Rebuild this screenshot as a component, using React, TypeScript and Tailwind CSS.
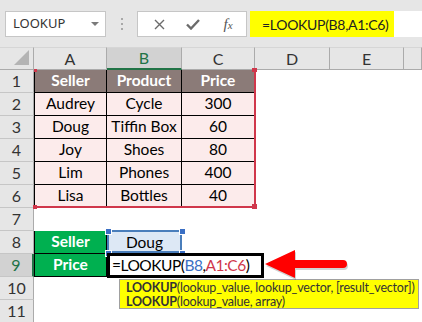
import React from "react";

const COLS = ["A", "B", "C", "D", "E", "F"];

type Cell = { t?: string; kind?: "head" | "body" | "green" | "blue" | "none" };

const rows: Cell[][] = [
  [{ t: "Seller", kind: "head" }, { t: "Product", kind: "head" }, { t: "Price", kind: "head" }],
  [{ t: "Audrey", kind: "body" }, { t: "Cycle", kind: "body" }, { t: "300", kind: "body" }],
  [{ t: "Doug", kind: "body" }, { t: "Tiffin Box", kind: "body" }, { t: "60", kind: "body" }],
  [{ t: "Joy", kind: "body" }, { t: "Shoes", kind: "body" }, { t: "80", kind: "body" }],
  [{ t: "Lim", kind: "body" }, { t: "Phones", kind: "body" }, { t: "400", kind: "body" }],
  [{ t: "Lisa", kind: "body" }, { t: "Bottles", kind: "body" }, { t: "40", kind: "body" }],
  [],
  [{ t: "Seller", kind: "green" }, { t: "Doug", kind: "blue" }],
  [{ t: "Price", kind: "green" }],
  [],
  [],
];

function cellClass(kind: Cell["kind"], col: number) {
  const left = col === 0 ? " border-l" : "";
  switch (kind) {
    case "head":
      return "flex items-center justify-center bg-[#8b7b78] text-white font-bold text-[15.5px] border-r border-b border-black" + left;
    case "body":
      return "flex items-center justify-center bg-[#fcebeb] text-black text-[15.5px] border-r border-b border-black" + left;
    case "green":
      return "flex items-center justify-center bg-[#00b050] text-white font-bold text-[15.5px] border-r border-b border-black" + left;
    case "blue":
      return "flex items-center justify-center bg-[#dde8f5] text-black text-[15.5px]";
    default:
      return "";
  }
}

export default function App() {
  return (
    <div className="w-[422px] h-[322px] overflow-hidden bg-white relative [font-family:Lato,'Liberation_Sans',sans-serif]">
      {/* Top formula bar */}
      <div className="h-[47px] bg-[#e6e6e6] flex items-start pt-[11px] pl-[5px]">
        <div className="w-[101px] h-[26px] bg-white border border-[#c6c6c6] flex items-center justify-between pl-[7px] pr-[6px]">
          <span className="text-[13px] text-[#333] [font-family:'Noto_Sans',sans-serif]">LOOKUP</span>
          <svg width="8" height="5" viewBox="0 0 8 5">
            <path d="M0 0 L8 0 L4 4 Z" fill="#7a7a7a" />
          </svg>
        </div>
        <div className="w-[31px] h-[26px] flex flex-col items-center justify-center gap-[3px]">
          <div className="w-[2px] h-[2px] bg-[#a8a8a8]" />
          <div className="w-[2px] h-[2px] bg-[#a8a8a8]" />
          <div className="w-[2px] h-[2px] bg-[#a8a8a8]" />
        </div>
        <div className="w-[110px] h-[26px] bg-white border border-[#c6c6c6] flex items-center">
          <div className="w-[42px] flex justify-center">
            <svg width="11" height="11" viewBox="0 0 11 11">
              <path d="M1 1 L10 10 M10 1 L1 10" stroke="#6b6b6b" strokeWidth="1.4" />
            </svg>
          </div>
          <div className="w-[26px] flex justify-center">
            <svg width="14" height="11" viewBox="0 0 14 11">
              <path d="M1 5.5 L5 9.5 L13 1" stroke="#6b6b6b" strokeWidth="2.4" fill="none" />
            </svg>
          </div>
          <div className="flex-1 flex justify-center pl-[4px]">
            <span className="italic text-[15px] text-[#555] [font-family:'Liberation_Serif',serif] leading-none">
              f<span className="text-[11px]">x</span>
            </span>
          </div>
        </div>
        <div className="ml-[3px] flex-1 h-[26px] bg-white flex">
          <div className="w-[144px] h-[26px] bg-[#ffff00] flex items-center pl-[12px]">
            <span className="text-[14px] tracking-[-0.3px] text-[#222] whitespace-nowrap">=LOOKUP(B8,A1:C6)</span>
          </div>
        </div>
      </div>

      {/* Sheet */}
      <div className="relative">
        <div className="grid grid-cols-[34px_73px_75px_73px_75px_74px_1fr] auto-rows-[23px] text-[16px]">
          {/* header row */}
          <div className="bg-[#e6e6e6] border-r border-b border-[#ababab] border-t border-t-[#d6d6d6] relative">
            <svg className="absolute right-[4px] bottom-[4px]" width="15" height="15" viewBox="0 0 15 15">
              <path d="M15 0 L15 15 L0 15 Z" fill="#b4b4b4" />
            </svg>
          </div>
          {COLS.map((c) =>
            c === "B" ? (
              <div
                key={c}
                className="flex items-center justify-center bg-[#d2d2d2] text-[#217346] border-r border-[#ababab] border-b-2 border-b-[#217346] border-t border-t-[#d6d6d6]"
              >
                {c}
              </div>
            ) : (
              <div
                key={c}
                className="flex items-center justify-center bg-[#e6e6e6] text-[#333] border-r border-b border-[#ababab] border-t border-t-[#d6d6d6]"
              >
                {c === "F" ? "" : c}
              </div>
            )
          )}
          {rows.map((r, ri) => (
            <React.Fragment key={ri}>
              {ri === 8 ? (
                <div className="flex items-center justify-center bg-[#d2d2d2] text-[#217346] border-r-2 border-r-[#217346] border-b border-b-[#c6c6c6]">
                  {ri + 1}
                </div>
              ) : (
                <div className="flex items-center justify-center bg-[#e6e6e6] text-[#333] border-r border-r-[#ababab] border-b border-b-[#c6c6c6]">
                  {ri + 1}
                </div>
              )}
              {COLS.map((c, ci) => {
                const cell = r[ci];
                if (!cell) return <div key={c} />;
                return (
                  <div key={c} className={cellClass(cell.kind, ci)}>
                    {cell.t}
                  </div>
                );
              })}
            </React.Fragment>
          ))}
        </div>

        {/* red range highlight A1:C6 */}
        <div className="absolute left-[34px] top-[23px] w-[222px] h-[138px] border-r-2 border-b-2 border-[#d0374b]" />
        <div className="absolute left-[34px] top-[22px] w-[3px] h-[3px] bg-[#d0374b]" />
        <div className="absolute left-[252px] top-[21px] w-[5px] h-[4px] bg-[#d0374b]" />
        <div className="absolute left-[33px] top-[158px] w-[4px] h-[4px] bg-[#d0374b]" />
        <div className="absolute left-[252px] top-[157px] w-[5px] h-[5px] bg-[#d0374b]" />

        {/* blue B8 selection */}
        <div className="absolute left-[107px] top-[183px] w-[75px] h-[23px] border-2 border-[#4a7ebb]" />
        <div className="absolute left-[105px] top-[181px] w-[5px] h-[5px] bg-[#3a6fc4] border border-white box-content" />
        <div className="absolute left-[179px] top-[181px] w-[5px] h-[5px] bg-[#3a6fc4] border border-white box-content" />
        <div className="absolute left-[105px] top-[203px] w-[5px] h-[5px] bg-[#3a6fc4] border border-white box-content" />
        <div className="absolute left-[179px] top-[203px] w-[5px] h-[5px] bg-[#3a6fc4] border border-white box-content" />

        {/* edit box B9 */}
        <div className="absolute left-[107px] top-[206px] w-[157px] h-[25px] border-[3px] border-black bg-white flex items-center pl-[2px]">
          <span className="text-[15.5px] tracking-[-0.5px] text-black leading-none whitespace-nowrap">
            =LOOKUP(<span className="text-[#3a6fc4]">B8</span>,<span className="text-[#d0374b]">A1:C6</span>)
          </span>
        </div>

        {/* tooltip */}
        <div className="absolute left-[119px] top-[232px] w-[300px] h-[30px] bg-[#ffff00] border border-[#a0a0a0] pl-[6px] pt-[1px] text-[12.5px] tracking-[-0.2px] leading-[14px] text-[#333] whitespace-nowrap">
          <div>
            <span className="font-bold">LOOKUP</span>(lookup_value, lookup_vector, [result_vector])
          </div>
          <div>
            <span className="font-bold">LOOKUP</span>(lookup_value, array)
          </div>
        </div>

        {/* red arrow */}
        <svg className="absolute left-[262px] top-[199px]" width="92" height="38" viewBox="0 0 92 38">
          <path
            d="M4 20 L34 6 L34 16 L82 16 A4 4 0 0 1 82 24 L34 24 L34 34 Z"
            fill="#000"
            opacity="0.18"
          />
          <path d="M3 18 L33 4 L33 14 L81 14 A4 4 0 0 1 81 22 L33 22 L33 32 Z" fill="#ff0000" />
        </svg>
      </div>
    </div>
  );
}
